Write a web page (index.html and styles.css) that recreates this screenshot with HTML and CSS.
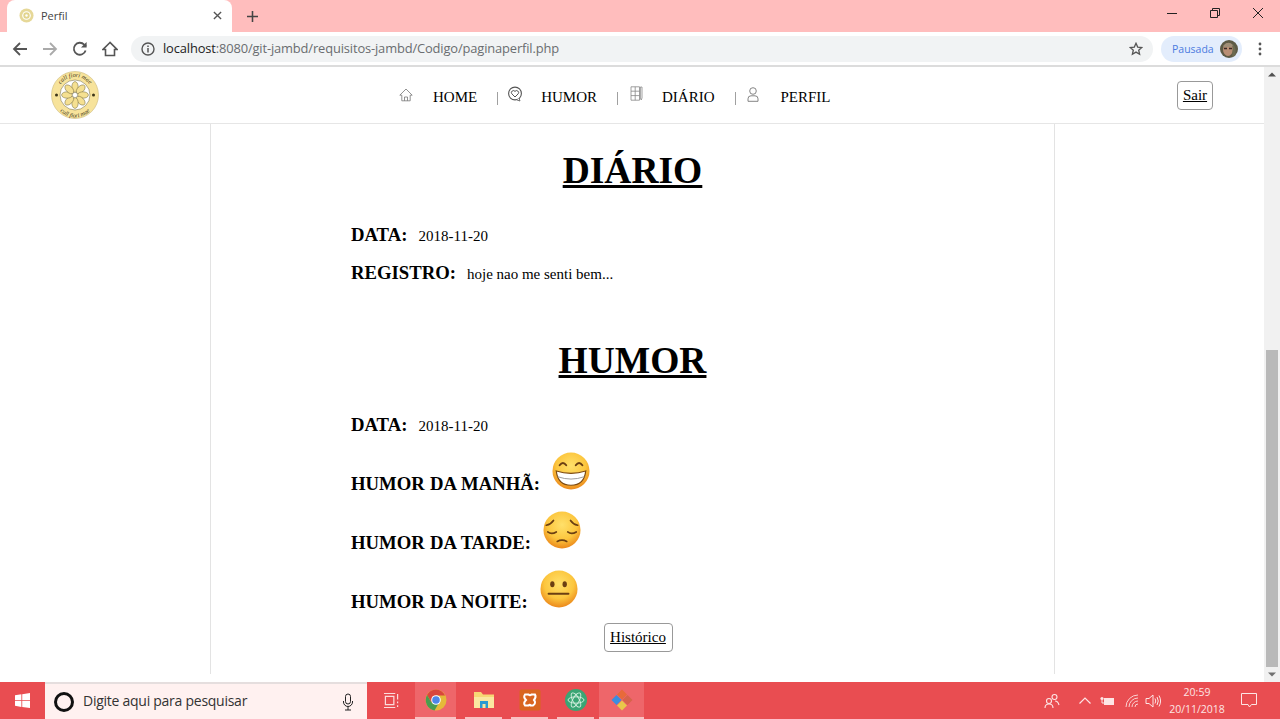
FILE: index.html
```html
<!DOCTYPE html>
<html lang="pt-BR">
<head>
<meta charset="utf-8">
<title>Perfil</title>
<link rel="stylesheet" href="styles.css">
</head>
<body>
<svg class="defs" width="0" height="0" aria-hidden="true">
  <defs>
    <radialGradient id="face" cx="50%" cy="36%" r="66%">
      <stop offset="0" stop-color="#ffe06a"/><stop offset=".6" stop-color="#fcc63e"/><stop offset="1" stop-color="#ea8318"/>
    </radialGradient>
  </defs>
</svg>
<div class="tabstrip">
  <div class="tab">
    <svg class="favicon" viewBox="0 0 16 16"><circle cx="8" cy="8" r="7.500" fill="#e6d898"/><circle cx="8" cy="8" r="4.600" fill="#fff"/><circle cx="8" cy="8" r="3.400" fill="#e2d48d"/><circle cx="8" cy="8" r="1.300" fill="#fff"/></svg>
    <span class="tab-title">Perfil</span>
    <svg class="tab-close" viewBox="0 0 10 10"><path d="M1 1l8 8M9 1l-8 8" stroke="#555" stroke-width="1.500"/></svg>
  </div>
  <svg class="new-tab" viewBox="0 0 12 12"><path d="M6 0v12M0 6h12" stroke="#444" stroke-width="1.700"/></svg>
  <div class="win-controls">
    <svg viewBox="0 0 12 12"><path d="M1 6.500h10" stroke="#222" stroke-width="1"/></svg>
    <svg viewBox="0 0 12 12"><path d="M3.500 3V1.500h7v7H9M1.500 3.500h7v7h-7z" fill="none" stroke="#222" stroke-width="1"/></svg>
    <svg viewBox="0 0 12 12"><path d="M1 1l10 10M11 1L1 11" stroke="#222" stroke-width="1"/></svg>
  </div>
</div>
<div class="toolbar">
  <svg class="tool-icon" viewBox="0 0 16 16"><path d="M15 8H2M8 2L2 8l6 6" fill="none" stroke="#555" stroke-width="1.800"/></svg>
  <svg class="tool-icon" viewBox="0 0 16 16"><path d="M1 8h13M8 2l6 6-6 6" fill="none" stroke="#aaa" stroke-width="1.800"/></svg>
  <svg class="tool-icon" viewBox="0 0 16 16"><path d="M13.600 9.500A6 6 0 1 1 12.200 3.600L14 5.400" fill="none" stroke="#555" stroke-width="1.800"/><path d="M14.600 1v5.500H9z" fill="#555"/></svg>
  <svg class="tool-icon" viewBox="0 0 16 16"><path d="M8 1.500L1 8.500h2.500v6h9v-6H15z" fill="none" stroke="#555" stroke-width="1.600"/></svg>
  <div class="omnibox">
    <svg class="info" viewBox="0 0 14 14"><circle cx="7" cy="7" r="6" fill="none" stroke="#555" stroke-width="1.400"/><path d="M7 6v4.500M7 3.400v1.500" stroke="#555" stroke-width="1.500"/></svg>
    <span class="url"><span class="url-host">localhost</span>:8080/git-jambd/requisitos-jambd/Codigo/paginaperfil.php</span>
    <svg class="star" viewBox="0 0 14 14"><path d="M7 1.300l1.700 3.800 4.100.4-3.100 2.700.9 4L7 10.100l-3.600 2.100.9-4-3.100-2.700 4.100-.4z" fill="none" stroke="#555" stroke-width="1.300"/></svg>
  </div>
  <div class="profile">
    <span class="paused">Pausada</span>
    <svg class="avatar" viewBox="0 0 18 18"><circle cx="9" cy="9" r="9" fill="#5d5a45"/><ellipse cx="8" cy="9.500" rx="5" ry="6.500" fill="#b98e74"/><path d="M3 6Q8 0 13 5l-1 2H4z" fill="#a08f78"/><path d="M4 8.500h3M9 8.500h3" stroke="#3b2a25" stroke-width="1.600"/><path d="M13 4q4 5 2 12l-3 1z" fill="#6c6a50"/></svg>
  </div>
  <svg class="menu" viewBox="0 0 4 16"><circle cx="2" cy="3" r="1.400" fill="#555"/><circle cx="2" cy="8" r="1.400" fill="#555"/><circle cx="2" cy="13" r="1.400" fill="#555"/></svg>
</div>
<div class="viewport">
  <div class="page">
    <header class="site-header">
      <div class="logo-slot">
        <svg class="logo" viewBox="0 0 48 48">
          <circle cx="24" cy="24" r="23.500" fill="#f7e39b" stroke="#cdbb7c" stroke-width=".6"/>
          <circle cx="24" cy="24" r="15" fill="#fff" stroke="#6b6238" stroke-width=".5"/>
          <defs>
            <path id="arcTop" d="M6 24a18 18 0 0 1 36 0"/>
            <path id="arcBot" d="M3.500 26a20.500 20.500 0 0 0 41 0"/>
          </defs>
          <text class="logo-text"><textPath href="#arcTop" startOffset="50%" text-anchor="middle">call fiori mae</textPath></text>
          <text class="logo-text"><textPath href="#arcBot" startOffset="50%" text-anchor="middle">call fiori mae</textPath></text>
          <circle cx="5.500" cy="24" r="1.500" fill="#3c3418"/><circle cx="42.500" cy="24" r="1.500" fill="#3c3418"/>
          <g fill="#f5e091" stroke="#6b6238" stroke-width=".5">
            <ellipse cx="24" cy="16" rx="3.200" ry="5.400"/>
            <ellipse cx="24" cy="16" rx="3.200" ry="5.400" transform="rotate(45 24 24)"/>
            <ellipse cx="24" cy="16" rx="3.200" ry="5.400" transform="rotate(90 24 24)"/>
            <ellipse cx="24" cy="16" rx="3.200" ry="5.400" transform="rotate(135 24 24)"/>
            <ellipse cx="24" cy="16" rx="3.200" ry="5.400" transform="rotate(180 24 24)"/>
            <ellipse cx="24" cy="16" rx="3.200" ry="5.400" transform="rotate(225 24 24)"/>
            <ellipse cx="24" cy="16" rx="3.200" ry="5.400" transform="rotate(270 24 24)"/>
            <ellipse cx="24" cy="16" rx="3.200" ry="5.400" transform="rotate(315 24 24)"/>
          </g>
          <circle cx="24" cy="24" r="2.600" fill="#fff" stroke="#6b6238" stroke-width=".4"/>
        </svg>
      </div>
      <nav class="nav-links">
        <svg class="nav-icon icon-home" viewBox="0 0 14 14"><path d="M7 1L.8 7.200h2v5.600h8.400V7.200h2zM5.500 12.800V9h3v3.800" fill="none" stroke="#777" stroke-width=".8"/></svg>
        <a class="nav-link link-home">HOME</a>
        <span class="sep"></span>
        <svg class="nav-icon icon-humor" viewBox="0 0 16 16"><circle cx="8" cy="7.500" r="6.400" fill="none" stroke="#555" stroke-width="1.100"/><path d="M8 11L4.800 7.800a2 2 0 0 1 3.200-2.400 2 2 0 0 1 3.200 2.400z" fill="none" stroke="#555" stroke-width="1"/><path d="M10 14l3 1-1-3" fill="#fff" stroke="#555" stroke-width=".8"/></svg>
        <a class="nav-link link-humor">HUMOR</a>
        <span class="sep"></span>
        <svg class="nav-icon icon-diary" viewBox="0 0 14 15"><path d="M1 .8h8.500v13.400H1zM1 5.200h8.500M1 9.600h8.500M5.200.8v13.400M12 1v11l-.8 2-.8-2V1z" fill="none" stroke="#888" stroke-width=".8"/></svg>
        <a class="nav-link link-diary">DIÁRIO</a>
        <span class="sep"></span>
        <svg class="nav-icon icon-user" viewBox="0 0 12 15"><circle cx="6" cy="4" r="3.300" fill="none" stroke="#777" stroke-width=".9"/><path d="M1 14.300v-2.500a3 3 0 0 1 3-3h4a3 3 0 0 1 3 3v2.500z" fill="none" stroke="#777" stroke-width=".9"/></svg>
        <a class="nav-link link-profile">PERFIL</a>
      </nav>
      <a class="btn btn-exit">Sair</a>
    </header>
    <main class="column">
      <h1 class="title title-diary">DIÁRIO</h1>
      <div class="entry entry-date"><strong class="label">DATA:</strong><span class="value">2018-11-20</span></div>
      <div class="entry entry-note"><strong class="label">REGISTRO:</strong><span class="value">hoje nao me senti bem...</span></div>
      <h1 class="title title-humor">HUMOR</h1>
      <div class="entry entry-date"><strong class="label">DATA:</strong><span class="value">2018-11-20</span></div>
      <div class="mood mood-first"><strong class="label">HUMOR DA MANHÃ:</strong>
        <svg class="emoji" viewBox="0 0 40 40"><circle cx="20" cy="20" r="19.500" fill="url(#face)"/><path d="M8 14q3.500-5 7 0M25 14q3.500-5 7 0" fill="none" stroke="#6b3f12" stroke-width="2" stroke-linecap="round"/><path d="M4.500 20Q20 25 35.500 20 34 35 20 35T4.500 20z" fill="#fff" stroke="#7d4a12" stroke-width="1.300"/><path d="M6 26Q20 31 34 26" fill="none" stroke="#9a9a9a" stroke-width="1"/></svg>
      </div>
      <div class="mood"><strong class="label">HUMOR DA TARDE:</strong>
        <svg class="emoji" viewBox="0 0 40 40"><circle cx="20" cy="20" r="19.500" fill="url(#face)"/><path d="M3.500 15q5-1 7.500-5M36.500 15q-5-1-7.500-5M5 22q4 3 9 0M26 22q4 3 9 0M15 32q5-2.500 10 0" fill="none" stroke="#6b3f12" stroke-width="1.800" stroke-linecap="round"/></svg>
      </div>
      <div class="mood"><strong class="label">HUMOR DA NOITE:</strong>
        <svg class="emoji" viewBox="0 0 40 40"><circle cx="20" cy="20" r="19.500" fill="url(#face)"/><ellipse cx="13" cy="15" rx="2.300" ry="3.200" fill="#6b3f12"/><ellipse cx="26" cy="15" rx="2.300" ry="3.200" fill="#6b3f12"/><path d="M9 25h21" stroke="#6b3f12" stroke-width="2" stroke-linecap="round"/></svg>
      </div>
      <div class="history-row"><a class="btn btn-history">Histórico</a></div>
    </main>
  </div>
  <aside class="scrollbar">
    <svg class="scroll-arrow" viewBox="0 0 8 5"><path d="M4 .5L8 4.500H0z" fill="#505050"/></svg>
    <div class="scroll-track"><div class="scroll-thumb"></div></div>
    <svg class="scroll-arrow" viewBox="0 0 8 5"><path d="M4 4.500L8 .5H0z" fill="#707070"/></svg>
  </aside>
</div>
<footer class="taskbar">
  <div class="start"><svg class="win-logo" viewBox="0 0 16 16"><path d="M0 2.300l6.800-1v6.300H0zM7.700 1.200L16 0v7.600H7.700zM0 8.500h6.800v6.300L0 13.700zM7.700 8.500H16V16l-8.300-1.200z" fill="#fff"/></svg></div>
  <div class="searchbox">
    <span class="cortana"></span>
    <span class="search-text">Digite aqui para pesquisar</span>
    <svg class="mic" viewBox="0 0 12 18"><rect x="3.500" y="1" width="5" height="10" rx="2.500" fill="none" stroke="#222" stroke-width="1"/><path d="M1.500 8v1a4.500 4.500 0 0 0 9 0V8M6 13.500V17M3 17h6" fill="none" stroke="#222" stroke-width="1"/></svg>
  </div>
  <div class="task-view"><svg viewBox="0 0 18 16"><path d="M1 .5h12M1 15.500h12M2.500 3.500h9v9h-9zM15.500 1v6M15.500 9v2M15.500 13v2" fill="none" stroke="#fbdcdc" stroke-width="1.300"/></svg></div>
  <div class="app app-active app-chrome">
    <svg viewBox="0 0 22 22"><circle cx="11" cy="11" r="10.500" fill="#e5b93a"/><path d="M11 .5A10.500 10.500 0 0 0 2 6l4.500 7.500L11 6.500h9A10.500 10.500 0 0 0 11 .5z" fill="#d9463c"/><path d="M2 6a10.500 10.500 0 0 0 7.500 15.400l4.500-7.600-7.500-.3z" fill="#4a9c4f"/><circle cx="11" cy="11" r="4.800" fill="#fff"/><circle cx="11" cy="11" r="3.800" fill="#4d86e8"/></svg>
  </div>
  <div class="app app-idle">
    <svg viewBox="0 0 22 20"><path d="M1 2h7l2 2.500h11V18H1z" fill="#f7d774"/><path d="M1 7h20v11H1z" fill="#fbe7a0"/><rect x="7" y="11" width="8" height="7" fill="#2b9ad1"/><rect x="9.500" y="14" width="3" height="4" fill="#fbe7a0"/></svg>
  </div>
  <div class="app app-idle">
    <svg viewBox="0 0 22 22"><rect x=".5" y=".5" width="21" height="21" rx="2" fill="#d9661f"/><path d="M6 5.500h3.500Q11 7 12.500 5.500H16q1.500 2.500-1 5.500 2.500 3-1 5.500h-2.500Q11 15 9.500 16.500H6q-2-2.500 1-5.500-3-3-1-5.500z" fill="none" stroke="#fff" stroke-width="2"/></svg>
  </div>
  <div class="app app-idle">
    <svg viewBox="0 0 22 22"><circle cx="11" cy="11" r="11" fill="#3aa574"/><g fill="none" stroke="#d8f0e2" stroke-width=".9"><ellipse cx="11" cy="11" rx="8" ry="3.200"/><ellipse cx="11" cy="11" rx="8" ry="3.200" transform="rotate(60 11 11)"/><ellipse cx="11" cy="11" rx="8" ry="3.200" transform="rotate(120 11 11)"/></g></svg>
  </div>
  <div class="app app-active app-git">
    <svg viewBox="0 0 24 24"><path d="M12 1.500l5 5-5 5-5-5z" fill="#e86a3a"/><path d="M6.500 7l5 5-5 5-5-5z" fill="#3c8de0"/><path d="M17.500 7l5 5-5 5-5-5z" fill="#d7634b"/><path d="M12 12.500l5 5-5 5-5-5z" fill="#e9c74a"/></svg>
  </div>
  <div class="tray">
    <svg class="tray-people" viewBox="0 0 16 16"><circle cx="10.500" cy="4" r="2.500" fill="none" stroke="#fde5e5" stroke-width="1.100"/><circle cx="5" cy="8" r="2.500" fill="none" stroke="#fde5e5" stroke-width="1.100"/><path d="M1 15q0-4 4-4t4 4M11 8q3 0 4 4" fill="none" stroke="#fde5e5" stroke-width="1.100"/></svg>
    <svg class="tray-chevron" viewBox="0 0 12 7"><path d="M.5 6.500L6 1l5.500 5.500" fill="none" stroke="#fde5e5" stroke-width="1.200"/></svg>
    <svg class="tray-battery" viewBox="0 0 15 10"><path d="M4 2h10v7H4z" fill="#fde5e5"/><circle cx="2" cy="2.500" r="1.600" fill="#fde5e5"/><path d="M2 4v3h2" fill="none" stroke="#fde5e5" stroke-width="1"/></svg>
    <svg class="tray-wifi" viewBox="0 0 14 14"><path d="M1 13A12 12 0 0 1 13 1M4 13a9 9 0 0 1 9-9M7 13a6 6 0 0 1 6-6M10 13a3 3 0 0 1 3-3" fill="none" stroke="#fbd2d2" stroke-width="1"/></svg>
    <svg class="tray-volume" viewBox="0 0 16 14"><path d="M1 4.500h3L8 1v12L4 9.500H1z" fill="none" stroke="#fde5e5" stroke-width="1"/><path d="M10 4.500q1.500 2.500 0 5M12 3q2.500 4 0 8M14 1.500q3.200 5.500 0 11" fill="none" stroke="#fde5e5" stroke-width="1"/></svg>
    <div class="clock"><span>20:59</span><span>20/11/2018</span></div>
    <svg class="tray-notify" viewBox="0 0 16 15"><path d="M.5.500h15V11.500h-5L8.500 14 7 11.500H.5z" fill="none" stroke="#fde5e5" stroke-width="1"/></svg>
  </div>
</footer>
</body>
</html>
```
FILE: styles.css
```css
* { box-sizing: border-box; }
html, body { margin: 0; height: 719px; overflow: hidden; }
body { display: flex; flex-direction: column; width: 1280px; background: #fff; font-family: "Liberation Serif", serif; color: #000; }
svg { display: block; flex: none; }
.defs { position: absolute; }

/* browser chrome */
.tabstrip { height: 32px; flex: none; background: #ffbdbd; display: flex; align-items: flex-end; padding-left: 7px; }
.tab { width: 225px; height: 32px; background: #fff; border-radius: 8px 8px 0 0; display: flex; align-items: center; padding: 0 10px 2px 12px; }
.favicon { width: 15px; height: 15px; margin-right: 7px; }
.tab-title { font: 11px "Open Sans", sans-serif; color: #444; flex: 1; }
.tab-close { width: 9px; height: 9px; }
.new-tab { width: 11px; height: 11px; margin: 0 0 10px 15px; }
.win-controls { margin-left: auto; display: flex; gap: 31px; padding-right: 16px; align-self: flex-start; padding-top: 7px; }
.win-controls svg { width: 12px; height: 12px; }
.toolbar { height: 33px; flex: none; background: #fff; display: flex; align-items: center; padding: 1px 0 0 12px; }
.tool-icon { width: 16px; height: 16px; margin-right: 14px; }
.omnibox { width: 1022px; height: 26px; margin-left: -1px; background: #f1f3f4; border-radius: 13px; display: flex; align-items: center; padding: 0 10px; }
.info { width: 14px; height: 14px; margin-right: 8px; }
.url { font: 12.900px "Open Sans", sans-serif; color: #6a6d70; flex: 1; letter-spacing: -.14px; white-space: nowrap; margin-top: -2px; }
.url-host { color: #222; }
.star { width: 14px; height: 14px; }
.profile { width: 81px; height: 26px; margin-left: 8px; background: #e3edfc; border-radius: 13px; display: flex; align-items: center; justify-content: space-between; padding: 0 4px 0 11px; }
.paused { font: 10.500px "Open Sans", sans-serif; color: #4c7be0; }
.avatar { width: 18px; height: 18px; }
.menu { width: 4px; height: 16px; margin-left: 16px; }

/* viewport */
.viewport { flex: 1; min-height: 0; display: flex; border-top: 2px solid #dcdcdc; }
.page { width: 1264px; display: flex; flex-direction: column; }
.scrollbar { width: 16px; background: #f1f1f1; display: flex; flex-direction: column; align-items: center; }
.scroll-arrow { width: 8px; height: 5px; margin: 5px 0; }
.scroll-track { flex: 1; width: 100%; padding: 268px 2px 0; display: flex; flex-direction: column; }
.scroll-thumb { flex: 1; background: #b9b9b9; }

.site-header { height: 57px; flex: none; border-bottom: 1px solid #e6e6e6; display: flex; align-items: center; padding: 0 51px; }
.logo-slot { width: 348px; flex: none; }
.logo { width: 48px; height: 48px; }
.logo-text { font: italic 6.200px "Liberation Serif", serif; fill: #3c3418; }
.nav-links { display: flex; align-items: center; font-size: 15px; height: 40px; }
.nav-link { color: #000; margin-top: 5px; line-height: 17px; }
.sep { width: 1px; height: 13px; background: #a0a0a0; margin-top: 7px; }
.icon-home { width: 14px; height: 14px; margin: 0 20px 0 0; }
.link-home { margin-right: 20px; }
.icon-humor { width: 16px; height: 16px; margin: 0 18px 2px 9px; }
.link-humor { margin-right: 20px; }
.icon-diary { width: 14px; height: 15px; margin: 0 18px 3px 12px; }
.link-diary { margin-right: 20px; }
.icon-user { width: 12px; height: 15px; margin: 0 22px 2px 11px; }
.btn { border: 1px solid #999; border-radius: 4px; color: #000; text-decoration: underline; font-size: 15px; background: #fff; display: block; }
.btn-exit { margin: 1px 0 0 auto; width: 36px; height: 29px; line-height: 27px; text-align: center; }

/* content */
.column { width: 845px; height: 550px; margin-left: 210px; border-left: 1px solid #e3e3e3; border-right: 1px solid #e3e3e3; padding-left: 140px; display: flex; flex-direction: column; }
.title { font-size: 37.500px; line-height: 43px; font-weight: bold; text-decoration: underline; text-align: center; margin: 0 0 0 -140px; }
.title-diary { margin-top: 25px; }
.title-humor { margin-top: 54px; }
.entry { display: flex; align-items: baseline; gap: 11px; height: 24px; line-height: 24px; }
.entry-date { margin-top: 31px; }
.entry-note { margin-top: 14px; }
.label { font-size: 18.720px; font-weight: bold; word-spacing: .5px; }
.value { font-size: 15px; }
.mood { display: flex; align-items: flex-end; gap: 12px; height: 39px; margin-top: 20px; line-height: 22px; }
.mood .label { margin-bottom: -4px; }
.mood-first { margin-top: 15px; }
.emoji { width: 38px; height: 38px; margin-bottom: 1px; }
.history-row { display: flex; justify-content: center; padding-right: 129px; margin-top: 14px; }
.btn-history { width: 69px; height: 29px; line-height: 27px; text-align: center; }

/* taskbar */
.taskbar { height: 37px; flex: none; background: #e94d51; display: flex; align-items: center; font-family: "Open Sans", sans-serif; }
.start { width: 45px; display: flex; justify-content: center; }
.win-logo { width: 15px; height: 15px; }
.searchbox { width: 322px; height: 37px; background: #fff1f0; border-top: 2px solid #e5dede; display: flex; align-items: center; padding: 0 12px 0 9px; }
.cortana { width: 20px; height: 20px; border: 3px solid #111; border-radius: 50%; margin-right: 9px; }
.search-text { font-size: 14px; color: #333; flex: 1; letter-spacing: -.26px; margin-top: -2px; }
.mic { width: 12px; height: 18px; margin-right: 1px; }
.task-view { width: 48px; display: flex; justify-content: center; }
.task-view svg { width: 17px; height: 15px; }
.app { height: 37px; display: flex; align-items: center; justify-content: center; border-bottom: 2px solid #f9c2c2; }
.app-active { background: #ee666a; }
.app-idle { width: 37px; margin-left: 9px; }
.app-idle svg { width: 22px; height: 22px; }
.app-chrome { width: 41px; }
.app-chrome svg { width: 22px; height: 22px; }
.app-git { width: 45px; margin-left: 5px; }
.app-git svg { width: 24px; height: 24px; }
.tray { margin-left: auto; display: flex; align-items: center; padding-right: 23px; }
.tray-people { width: 16px; height: 16px; margin-right: 19px; }
.tray-chevron { width: 12px; height: 7px; margin-right: 9px; }
.tray-battery { width: 15px; height: 10px; margin-right: 10px; }
.tray-wifi { width: 14px; height: 14px; margin-right: 6px; }
.tray-volume { width: 16px; height: 14px; margin-right: 8px; }
.clock { display: flex; flex-direction: column; align-items: center; width: 56px; font-size: 10.500px; line-height: 17px; color: #fde5e5; margin-right: 16px; }
.tray-notify { width: 16px; height: 15px; }
```
